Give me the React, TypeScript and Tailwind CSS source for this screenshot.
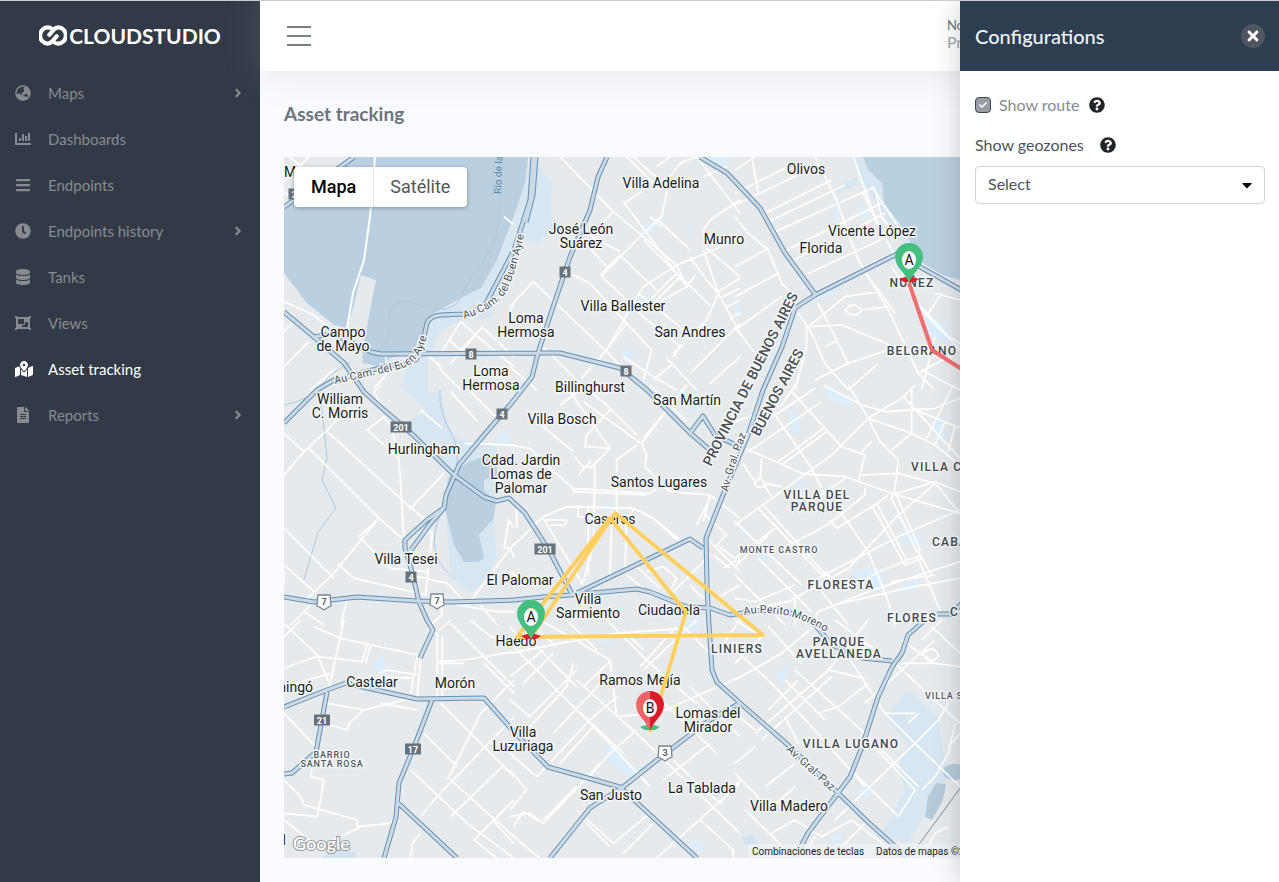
import { useState } from "react";
import type { ReactNode } from "react";
import type { IconType } from "react-icons";
import {
  FaAngleRight,
  FaBars,
  FaCaretDown,
  FaChartBar,
  FaCheck,
  FaClock,
  FaDatabase,
  FaFileAlt,
  FaGlobeAsia,
  FaMapMarkedAlt,
  FaObjectGroup,
  FaQuestionCircle,
  FaTimes,
} from "react-icons/fa";

type NavItem = { label: string; icon: IconType; expandable?: boolean; active?: boolean };

const navItems: NavItem[] = [
  { label: "Maps", icon: FaGlobeAsia, expandable: true },
  { label: "Dashboards", icon: FaChartBar },
  { label: "Endpoints", icon: FaBars },
  { label: "Endpoints history", icon: FaClock, expandable: true },
  { label: "Tanks", icon: FaDatabase },
  { label: "Views", icon: FaObjectGroup },
  { label: "Asset tracking", icon: FaMapMarkedAlt, active: true },
  { label: "Reports", icon: FaFileAlt, expandable: true },
];

function Logo() {
  return (
    <a href="#" className="flex h-[69px] items-center justify-center gap-0.5 text-white">
      <svg viewBox="116 77 82 62" className="h-[21px] w-7" fill="none" stroke="currentColor" strokeWidth="12">
        <path d="M146 106 L158 92 Q165 84 173 84 A22 24 0 0 1 173 132 Q165 132 160 128" strokeLinecap="round" />
        <path d="M168 110 L156 124 Q149 132 141 132 A22 24 0 0 1 141 84 Q149 84 154 88" strokeLinecap="round" />
      </svg>
      <span className="text-[21px] leading-6 font-bold">CLOUDSTUDIO</span>
    </a>
  );
}

function Sidebar() {
  return (
    <aside className="w-[260px] shrink-0 bg-[#333a47]">
      <Logo />
      <nav>
        <ul>
          {navItems.map(({ label, icon: Icon, expandable, active }) => (
            <li key={label}>
              <a
                href="#"
                className={`flex h-[46px] items-center px-[15px] text-[15px] ${active ? "text-white" : "text-[#868b90]"}`}
              >
                <span className="flex w-[33px] shrink-0">
                  <Icon className={active ? "h-4 w-[18px]" : "size-4"} />
                </span>
                <span className="grow">{label}</span>
                {expandable && <FaAngleRight className="size-3.5" />}
              </a>
            </li>
          ))}
        </ul>
      </nav>
    </aside>
  );
}

function TopBar() {
  return (
    <header className="flex h-[70px] items-center justify-between bg-white pr-[315px] pl-[27px] shadow-[0_0_35px_rgba(154,161,171,0.25)]">
      <button type="button" aria-label="Toggle menu" className="flex w-6 flex-col gap-[7px]">
        <span className="h-0.5 w-full bg-[#7b8084]" />
        <span className="h-0.5 w-full bg-[#7b8084]" />
        <span className="h-0.5 w-full bg-[#7b8084]" />
      </button>
      <div className="flex flex-col pb-1">
        <span className="text-[13px] leading-4 text-[#6c757d]">No</span>
        <span className="text-base leading-[18px] text-[#a0a5aa]">Pr</span>
      </div>
    </header>
  );
}

/* Minor streets, one sheet per grid cell, drawn at three times map scale. */
const streetSheets: { x: number; y: number; d: string }[] = [
  {
    x: 284,
    y: 150,
    d: "M15 20L70 65M75 20L0 95M0 125L40 165M0 455L90 495L180 570M0 650L75 575M0 545L25 520M660 200L690 225M465 620L530 515L575 555L500 640M575 555L690 650M465 640L470 660L530 720M495 570L560 625M595 532L530 600M595 532L690 620M680 480L690 460M430 615L470 650M305 620L310 670L270 715M80 720L150 660",
  },
  {
    x: 510,
    y: 150,
    d: "M150 20L310 185L500 345L530 410M310 185L240 260M350 20L445 115M370 20L470 110M440 50L480 20M510 40L480 80L455 200L385 265L275 378L400 500L510 590M410 115L340 160L365 145M210 240L330 305M200 250L290 350M340 155L530 410L555 375M420 200L455 230M500 345L400 410L290 600L215 685M530 410L450 455M600 465L480 350M440 205L540 300M0 470L70 395L285 600L400 720M190 375L240 400L350 520L425 600L400 690M350 520L285 605L215 685M385 430L510 530L535 560L490 620M540 320L590 390L620 425M580 300L625 430L690 550M500 345L600 305L690 260M580 240L600 210L690 150M510 40L560 20L690 190M580 80L650 50M625 425L690 385M630 445L690 415M645 475L690 450M660 505L690 490M625 430L590 510L490 610M690 520L540 670M340 620L430 680L500 720M470 625L560 720M490 640L430 690M690 620L600 700M270 375L330 315L440 420M500 370L420 450M510 380L430 460M580 240L585 290L690 380M100 590L230 720M0 650L80 720M400 270L500 370",
  },
  {
    x: 735,
    y: 150,
    d: "M355 20L415 190L490 340L550 470L675 600M240 20L300 140L370 330L460 480L550 670L600 720M410 110L490 230M420 120L440 200L480 260M385 130L440 250M0 60L60 20M0 130L180 40M0 165L200 70M90 190L290 90M100 215L330 105M120 245L420 110M155 300L440 160M175 330L450 190M210 375L480 250M50 20L70 130M0 200L40 250L100 300L140 400L180 440M0 350L100 295M0 440L130 370M0 540L140 440M190 490L230 550L270 640L340 720M250 460L340 640M220 530L320 525L430 570L500 600M330 440L430 425M220 530L330 440M215 530L215 590L180 720M0 530L60 610M270 590L310 570M240 690L340 640L460 600M600 430L675 450M620 430L580 490M550 670L640 620M560 660L675 720M470 350L540 450L640 560L675 580M330 480Q355 450 380 480Q360 510 330 480M380 480L460 470M390 370L430 420L480 490M600 560L560 720M640 620L675 660M430 640L340 720",
  },
  {
    x: 284,
    y: 385,
    d: "M0 145L60 200L0 270M60 200L130 135L230 30M75 190L285 400L360 465M130 140L360 350L430 410M285 400L225 455L320 550L430 560M285 400L140 575L60 650M0 430L150 580M160 535L210 580L430 630M0 540L90 620M345 220L360 465M345 220L250 135L300 95L320 120L345 215M270 20L300 75M480 265L375 375M430 440H445L425 630M410 75L475 130M500 20L580 110M560 20L640 100M540 175L690 180M270 20L290 0M380 570L490 595L550 660M60 680L120 720M190 640L170 720M20 720L80 660M520 660L640 680L690 680M550 660L680 490L660 490L675 405L690 430M680 490L690 520M470 660L475 690L440 720M580 650L640 720M0 560L0 600",
  },
  {
    x: 510,
    y: 385,
    d: "M100 125L190 200M305 70L230 150L225 185L300 190L240 250M150 60L230 0M180 20L300 190M240 20L290 60L380 150M220 50L400 180M320 220L320 380M530 0L395 175L410 210L405 245L480 320L600 330L580 410M380 180L320 225M500 40L400 160M190 310L420 325L440 310M190 320L410 330M190 310V320M0 180L60 190L120 250L190 310M255 245L250 480L220 590M195 215L220 245L255 245M205 270L245 225M100 395L170 365L370 370L430 400L510 465M205 360L205 395L300 400M100 405L170 405L165 420L120 420M235 360L235 570M305 410L300 570M350 400L345 550M100 400L220 600M100 395L0 490M430 400L500 465M20 370L20 430M600 330L690 400M585 390L650 450L620 480L690 530M600 340L560 420M600 470L690 560M660 550L610 510M350 570L400 610M380 545L450 610M410 560L460 545L500 580L480 620M490 620L600 510M540 600L580 640M620 640L690 600M0 560L60 600M60 680L120 640M160 560L140 600M640 550L690 520M370 370L360 400L300 380M420 0L530 110",
  },
  {
    x: 735,
    y: 385,
    d: "M170 20L320 185L390 210L370 290M30 190L100 220L200 265L330 275L470 325L675 385M80 220L75 285M88 300L110 335M60 295A14 12 0 1 0 88 295A14 12 0 1 0 60 295M90 295L140 305M20 230L60 290M120 90L230 250L270 330L330 400L400 500L460 650L480 720M0 110L140 60L180 0M0 170L210 30L240 10M40 200L260 50M130 230L265 130M140 240L275 140M0 420L290 210L400 100L505 35L540 0M400 100L530 145L600 180L675 240M265 0L380 60L450 80L600 70L675 40M340 0L400 100L435 170L490 225L480 310L470 340L545 500L555 495L480 320M410 170L380 200M530 10L530 145L470 195M505 35L675 220M655 0L575 160M530 70L675 130M630 110L600 180M660 120L640 200M0 520L120 430M70 370L270 580M85 360L290 590M0 410L200 600M0 545L100 450M70 520L230 680M160 480L240 440L290 410L390 330V310M285 405L305 430L420 360L460 330M470 330L600 290L675 320M380 270L490 265L600 295L480 400L340 550L160 650L0 680M550 500L590 570M410 360L510 540L560 520M425 355L520 535M600 295L675 385M675 375L500 450L250 580M270 560L330 620M675 530L400 620L250 680L230 720M675 580L510 610L300 660M550 520L620 690M380 590L430 560L560 510M260 620L340 720M470 590L600 570M0 570L150 720M0 640L60 650L180 600M180 640V720M330 280L230 350",
  },
  {
    x: 284,
    y: 620,
    d: "M0 10L100 105L140 200M180 0L135 205M0 145L95 110L200 120M50 0L0 50M90 20L170 55L400 105M260 75L245 130M250 70L235 125L200 120M400 105L380 220M410 115L400 230M285 160L310 150L400 165M290 170L390 175M460 40V230M475 50V230M465 125L540 120L690 95M540 130H465M500 10L690 200M455 40L500 0M430 20L455 40M560 0L620 50L690 70M690 180L590 280L490 480M470 250L690 470M690 290L450 540L410 590M420 340L520 440M380 450L550 610L690 715M500 480L690 650M655 440L500 590M690 540L570 660M410 640L385 670L380 715M625 600L690 670M130 250L240 270L400 230M240 270L195 310L190 330L120 310M290 250L400 270M0 280L95 380M85 440L80 470L120 480L100 590L0 580M0 480L50 530L60 555L220 600L220 620L320 610L340 580M230 620L90 690M0 600L100 680M140 160L0 200M570 660L640 715M600 130L690 220",
  },
  {
    x: 510,
    y: 620,
    d: "M0 100L150 70L320 40L520 25M0 70L170 240L340 400M30 30L200 200M60 10L140 80M190 130L170 200L60 320M0 170L100 90M40 190L130 100M0 240L60 290L200 150M130 340L290 170M90 0L300 120L315 245L320 290M220 200L300 125M290 0L420 130L570 260M340 30L400 90M400 150L560 0M390 140L500 20M110 180L260 330L420 500M200 180L390 350L690 640M320 230L240 300L80 470M250 320L150 430M380 330L300 400L220 490M420 290L690 170M320 290L440 280M440 230L620 400M490 420L560 490L630 550L690 480M460 480L600 370M520 20L600 100M620 100L690 0M0 450L50 510L0 570M0 590L60 580L100 610L270 430M0 640L90 715M100 600L200 500M200 570L310 670L420 580M220 600L300 680M340 700L440 600M390 560L540 700M570 600L670 690V715M440 715L690 490M80 470L0 400M0 20L60 90M170 0L260 90M540 200L690 350M10 620L40 575L100 610",
  },
  {
    x: 735,
    y: 620,
    d: "M0 180L140 100L200 50L260 0M110 190L230 320L390 500M150 180L270 300M180 150L390 340L550 500M0 90L110 190M60 340L280 150L400 0M80 360L290 170M280 150L390 175M300 50L450 280M300 0L420 90M100 270L190 180M150 290L190 370M250 280L310 260L400 190M470 130L600 130L675 140M480 130L675 310M500 60L600 130M590 20L675 100M450 280L540 370L675 500M540 370L610 300L640 250M540 370L300 600M380 340L540 510L490 590M360 460L490 590M390 250L600 60M0 430L60 380M90 500L180 430M0 460L60 520L100 570L180 500M30 570L180 715M110 640L180 600L260 650L350 600L480 700M240 650L200 715M0 280L60 330M565 100Q600 70 610 110Q580 140 565 100M620 0L560 60M450 280H540M520 310L550 280M660 310L640 400L600 470L560 510M640 620L600 640L560 715M100 20L200 130M0 0L80 50L0 130M675 340L640 380M320 680L400 600",
  },
];

const parks = [
  "M528 157L537 165L546 176L552 182L551 205L553 230L537 243L522 240L505 275L490 318L464 320L440 330L428 360L428 392L441 392L448 425L457 438L497 447L494 520L497 558L484 582L471 593L451 578L446 518L450 470L412 432L412 420L426 410L400 385L416 350L431 315L457 300L481 288L497 260L514 223Z",
  "M863 157L868 170L882 183L884 203L900 215L912 240L925 262L900 240L880 210L862 180L850 157Z",
  "M908 690L938 717L947 777L908 843L878 837L892 817L905 790L898 767L908 745L885 717Z",
  "M834 188L857 176V184L838 194Z",
];

const smallGreens =
  "M640 230L660 218L664 222L643 238ZM686 226L691 230V238L687 234ZM628 305L648 295L650 302L632 315ZM624 350L634 352L632 362L623 358ZM710 157L730 157L728 164L715 165ZM835 205L841 212L838 220L833 215ZM860 205L871 210L868 220L860 214ZM925 315L947 325L950 345L928 335ZM913 342L930 350L925 362L916 358ZM825 388L852 398L850 405L830 402ZM788 408L800 420L798 435L790 425ZM855 570L880 568L884 590L862 590L852 582ZM900 535L922 535L920 545L902 542ZM900 588L918 580L915 590L905 592ZM605 745L618 750L636 770L632 779L616 768L605 755ZM700 157L712 157L709 163ZM372 665L382 655L386 670L378 672ZM495 438L508 430L512 440L500 446ZM686 400L700 404L698 412L686 408ZM604 502L612 502L610 512L604 510ZM672 622L700 620L698 632L676 632ZM776 675L788 666L785 680L778 682ZM855 792L872 783L872 795L860 800ZM690 840L702 842L703 852L692 850ZM830 838L842 832L840 845ZM595 634L612 636L612 642L600 644ZM758 555L770 550L774 560L762 562ZM738 525L746 530L742 536ZM933 415L943 420L945 440L934 440ZM793 480L803 485L808 500L800 502ZM735 300L741 310L736 320ZM808 300L822 292L838 288L830 296Z";

const highways = [
  "M533 157L530 200L523 222L514 250L484 307L464 314L441 315Q430 316 427 323L421 350L416 360L380 368L334 380L317 390L284 423",
  "M536 157L533 195L526 222",
  "M284 207L354 157",
  "M284 312L314 337L344 363L364 392L384 410L411 433L454 475L484 497L497 501L509 498L525 513L550 552L573 596",
  "M314 337L331 334L347 340L371 352L381 354L538 353L560 353L620 368L647 390L690 433L710 450",
  "M690 433L703 416L715 435L740 447",
  "M607 157L598 177L590 210L570 257L553 307L538 353L532 377L510 405L484 435L459 465L454 477L446 495L444 508L427 520L405 540V548L412 572L419 602L427 620L433 630L420 658",
  "M444 508L430 524L411 550",
  "M284 597L314 602L357 597L417 601L451 602L514 600L543 597L570 595L637 589L650 592L687 607L710 608L730 615L748 612Q790 605 815 625L832 645L862 658L892 661",
  "M577 593L690 539L703 548",
  "M965 292L922 268L897 254L865 270L815 295L795 308L782 347L763 390L748 435L723 495L706 538L707 585L709 625L712 670L717 682L740 703L788 745L832 787L868 822L908 858",
  "M700 157L727 173L760 208L785 253L815 294",
  "M965 600L952 614L937 614M925 620L908 635L902 653L892 667L878 697L862 747L850 777L838 793L808 833L795 858",
  "M740 703L710 720L683 740L657 760L623 787L590 808L570 833L550 858",
  "M284 707L327 690L346 683L367 688L417 699L484 698L517 735L548 767L620 787L697 858",
  "M327 692L316 752L292 773L284 774",
  "M432 700L414 747L399 783L396 817L384 858M397 802L457 858",
].join("");

const streams =
  "M500 200Q500 240 484 260T460 298T420 305T390 320T374 352M321 400L327 458L322 480L336 508L318 532L304 580M440 390Q438 410 452 435T444 505T450 575M284 405Q310 402 330 375L350 362";

type Label = { x: number; y: number; lines: string[]; kind?: "district" | "barrio"; anchor?: "end" | "start" };

const labels: Label[] = [
  { x: 284, y: 177, lines: ["Ma"], anchor: "start" },
  { x: 661, y: 188, lines: ["Villa Adelina"] },
  { x: 806, y: 174, lines: ["Olivos"] },
  { x: 581, y: 234, lines: ["José León", "Suárez"] },
  { x: 724, y: 244, lines: ["Munro"] },
  { x: 872, y: 236, lines: ["Vicente López"] },
  { x: 821, y: 253, lines: ["Florida"] },
  { x: 623, y: 311, lines: ["Villa Ballester"] },
  { x: 526, y: 323, lines: ["Loma", "Hermosa"] },
  { x: 690, y: 337, lines: ["San Andres"] },
  { x: 343, y: 337, lines: ["Campo", "de Mayo"] },
  { x: 491, y: 376, lines: ["Loma", "Hermosa"] },
  { x: 590, y: 392, lines: ["Billinghurst"] },
  { x: 340, y: 404, lines: ["William", "C. Morris"] },
  { x: 687, y: 405, lines: ["San Martín"] },
  { x: 562, y: 424, lines: ["Villa Bosch"] },
  { x: 424, y: 454, lines: ["Hurlingham"] },
  { x: 521, y: 465, lines: ["Cdad. Jardin", "Lomas de", "Palomar"] },
  { x: 659, y: 487, lines: ["Santos Lugares"] },
  { x: 610, y: 524, lines: ["Caseros"] },
  { x: 406, y: 564, lines: ["Villa Tesei"] },
  { x: 520, y: 585, lines: ["El Palomar"] },
  { x: 588, y: 604, lines: ["Villa", "Sarmiento"] },
  { x: 669, y: 615, lines: ["Ciudadela"] },
  { x: 516, y: 646, lines: ["Haedo"] },
  { x: 640, y: 685, lines: ["Ramos Mejía"] },
  { x: 372, y: 687, lines: ["Castelar"] },
  { x: 455, y: 688, lines: ["Morón"] },
  { x: 313, y: 692, lines: ["Ituzaingó"], anchor: "end" },
  { x: 708, y: 718, lines: ["Lomas del", "Mirador"] },
  { x: 523, y: 737, lines: ["Villa", "Luzuriaga"] },
  { x: 611, y: 800, lines: ["San Justo"] },
  { x: 702, y: 793, lines: ["La Tablada"] },
  { x: 789, y: 811, lines: ["Villa Madero"] },
  { x: 286, y: 845, lines: ["l"], anchor: "end" },
  { x: 912, y: 287, lines: ["NUÑEZ"], kind: "district" },
  { x: 922, y: 355, lines: ["BELGRANO"], kind: "district" },
  { x: 911, y: 471, lines: ["VILLA CRESPO"], kind: "district", anchor: "start" },
  { x: 817, y: 499, lines: ["VILLA DEL", "PARQUE"], kind: "district" },
  { x: 932, y: 546, lines: ["CABALLITO"], kind: "district", anchor: "start" },
  { x: 841, y: 589, lines: ["FLORESTA"], kind: "district" },
  { x: 912, y: 622, lines: ["FLORES"], kind: "district" },
  { x: 950, y: 616, lines: ["C"], kind: "district", anchor: "start" },
  { x: 839, y: 646, lines: ["PARQUE", "AVELLANEDA"], kind: "district" },
  { x: 737, y: 653, lines: ["LINIERS"], kind: "district" },
  { x: 851, y: 748, lines: ["VILLA LUGANO"], kind: "district" },
  { x: 779, y: 553, lines: ["MONTE CASTRO"], kind: "barrio" },
  { x: 925, y: 699, lines: ["VILLA SOLDATI"], kind: "barrio", anchor: "start" },
  { x: 332, y: 758, lines: ["BARRIO", "SANTA ROSA"], kind: "barrio" },
];

const labelStyles = {
  town: "fill-[#1c1d20] text-[14px]",
  district: "fill-[#45494d] text-[12px] font-medium tracking-widest",
  barrio: "fill-[#55595d] text-[9px] font-medium tracking-widest",
};
const lineSteps = { town: 14, district: 12, barrio: 9 };

function MapLabel({ x, y, lines, kind, anchor = "middle" }: Label) {
  const style = kind ?? "town";
  return (
    <text textAnchor={anchor} className={labelStyles[style]}>
      {lines.map((line, i) => (
        <tspan key={line} x={x} y={y + i * lineSteps[style]}>
          {line}
        </tspan>
      ))}
    </text>
  );
}

const roadLabels = [
  { id: "ayre-north", d: "M464 319Q500 308 509 286T525 230", text: "Au Cam. del Buen Ayre" },
  { id: "ayre-west", d: "M335 384L400 369Q422 362 427 335", text: "Au Cam. del Buen Ayre" },
  { id: "paz-north", d: "M728 492Q734 465 748 430", text: "Av. Gral. Paz" },
  { id: "paz-south", d: "M786 750L835 795", text: "Av. Gral. Paz" },
  { id: "moreno", d: "M744 615Q785 607 824 631", text: "Au Perito Moreno" },
];

const plates = [
  { x: 565, y: 272, n: "4" },
  { x: 471, y: 354, n: "8" },
  { x: 626, y: 371, n: "8" },
  { x: 502, y: 414, n: "4" },
  { x: 401, y: 427, n: "201" },
  { x: 545, y: 549, n: "201" },
  { x: 411, y: 577, n: "4" },
  { x: 322, y: 720, n: "21" },
  { x: 413, y: 749, n: "17" },
  { x: 294, y: 194, n: "2" },
];

const shields = [
  { x: 324, y: 602, n: "7" },
  { x: 437, y: 601, n: "7" },
  { x: 665, y: 753, n: "3" },
];

function Pin({ x, y, letter, light, dark, base }: { x: number; y: number; letter: string; light: string; dark: string; base: string }) {
  return (
    <g transform={`translate(${x} ${y})`}>
      <path d="M-10 -4L-4 -6H4L10 -4L5 -1H-5Z" fill={base} />
      <path d="M0 0C-3 -10 -14 -15 -14 -27A14 14 0 0 1 0 -40Z" fill={light} />
      <path d="M0 0C3 -10 14 -15 14 -27A14 14 0 0 0 0 -40Z" fill={dark} />
      <ellipse cx="0" cy="-23" rx="7" ry="9" fill="#fff" />
      <text y="-18" textAnchor="middle" className="fill-[#111] text-[14px]">
        {letter}
      </text>
    </g>
  );
}

function CityMap() {
  return (
    <svg
      viewBox="284 157 971 701"
      preserveAspectRatio="xMinYMin slice"
      className="block size-full font-['Roboto',sans-serif]"
      role="img"
      aria-label="Mapa"
    >
      <rect x="284" y="157" width="971" height="701" fill="#e6eaed" />
      <path d={parks.join("")} fill="#d7e6f1" />
      <path
        d="M354 157H528L525 183L512 222L497 260L481 288L457 300L431 315L421 337L416 352L390 358L384 367L362 363L364 343L372 300L376 280L361 275L354 305L347 328L334 325L307 303L284 273V207Z"
        fill="#bad0e1"
      />
      <path d="M863 157L868 170L882 183L884 203L905 230L918 260L942 275L960 280L1255 420V157Z" fill="#b9d0e1" />
      <path d="M464 465Q484 452 497 460L497 475L484 480V490L496 502L494 518L479 535L484 558L478 562L464 562L454 545L444 505L448 478Z" fill="#bad0e1" />
      <path d="M936 783L946 784L943 800L932 820L925 817L928 797Z" fill="#b5cbdc" />
      <ellipse cx="955" cy="772" rx="12" ry="8" fill="#b5cbdc" />
      <path d="M320 858L335 850L355 852V858ZM742 837L752 835L762 848L745 845Z" fill="#d2e2ee" />
      <path d={smallGreens} fill="#dceefb" />
      <path d={streams} fill="none" stroke="#adc8dc" strokeWidth="1" />
      <path d="M375 157L370 217L364 260L353 293L347 328" fill="none" stroke="#fff" strokeWidth="2" />
      {streetSheets.map((sheet) => (
        <path
          key={`${sheet.x}-${sheet.y}`}
          d={sheet.d}
          transform={`translate(${sheet.x} ${sheet.y}) scale(0.33333)`}
          fill="none"
          stroke="#fff"
          strokeWidth="5"
          strokeLinejoin="round"
        />
      ))}
      <path d="M975 768L917 847" fill="none" stroke="#7f8c96" strokeWidth="1" />
      <path d={highways} fill="none" stroke="#6590b4" strokeWidth="5" strokeLinejoin="round" />
      <path d={highways} fill="none" stroke="#ccdae6" strokeWidth="3" strokeLinejoin="round" />

      {plates.map(({ x, y, n }) => (
        <g key={`${x}-${y}`}>
          <rect x={x - (n.length * 5 + 6) / 2} y={y - 5.5} width={n.length * 5 + 6} height="11" fill="#68727b" />
          <text x={x} y={y + 4} textAnchor="middle" className="fill-white text-[9px] font-bold">
            {n}
          </text>
        </g>
      ))}
      {shields.map(({ x, y, n }) => (
        <g key={`${x}-${y}`}>
          <path
            d={`M${x - 6} ${y - 7}H${x + 6}L${x + 7} ${y + 4}Q${x + 4} ${y + 5} ${x} ${y + 8}Q${x - 4} ${y + 5} ${x - 7} ${y + 4}Z`}
            fill="#fff"
            stroke="#7e868d"
            strokeWidth="1.3"
          />
          <text x={x} y={y + 3} textAnchor="middle" className="fill-[#5b636b] text-[9px] font-bold">
            {n}
          </text>
        </g>
      ))}

      <g stroke="#f4f6f8" strokeWidth="3" strokeLinejoin="round" paintOrder="stroke">
        <g className="fill-[#4b5258] text-[11px]">
          {roadLabels.map(({ id, d, text }) => (
            <g key={id}>
              <path id={id} d={d} fill="none" stroke="none" />
              <text>
                <textPath href={`#${id}`}>{text}</textPath>
              </text>
            </g>
          ))}
        </g>
        {labels.map((label) => (
          <MapLabel key={`${label.x}-${label.y}`} {...label} />
        ))}
        <g className="fill-[#4a4e52] text-[14px] font-medium">
          <text transform="translate(711 467) rotate(-63)">PROVINCIA DE BUENOS AIRES</text>
          <text transform="translate(759 437) rotate(-62)">BUENOS AIRES</text>
        </g>
      </g>
      <text transform="translate(501 194) rotate(-88)" className="fill-[#5f87a8] text-[10px]">
        Río de la Plata
      </text>

      <path d="M531 637L615 513L763 635L517 637L610 518L686 612L650 732" fill="none" stroke="#ffd05f" strokeWidth="4" strokeLinejoin="round" />
      <path d="M909 283L932 350L960 368L985 384" fill="none" stroke="#f26d6d" strokeWidth="4" strokeLinejoin="round" />
      <Pin x={909} y={283} letter="A" light="#45bf7f" dark="#45bf7f" base="#dc1f2b" />
      <Pin x={531} y={640} letter="A" light="#45bf7f" dark="#45bf7f" base="#dc1f2b" />
      <Pin x={650} y={731} letter="B" light="#f06469" dark="#dc1b28" base="#45bf7f" />

      <text
        x="293"
        y="850"
        className="fill-white font-['Lato',sans-serif] text-[18px] font-semibold"
        stroke="#92979b"
        strokeWidth="2"
        paintOrder="stroke"
      >
        Google
      </text>
    </svg>
  );
}

function MapTypeToggle() {
  const [type, setType] = useState("Mapa");
  return (
    <div className="absolute top-2.5 left-2.5 flex h-10 rounded-sm bg-white font-['Roboto',sans-serif] text-lg shadow-[0_1px_4px_rgba(0,0,0,0.3)]">
      {["Mapa", "Satélite"].map((name) => (
        <button
          key={name}
          type="button"
          onClick={() => setType(name)}
          className={`border-r border-[#e6e6e6] px-[17px] last:border-r-0 last:pl-4 ${type === name ? "font-medium text-black" : "text-[#565656]"}`}
        >
          {name}
        </button>
      ))}
    </div>
  );
}

function MapCredits() {
  return (
    <div className="absolute right-0 bottom-0 left-[464px] flex h-3.5 items-center gap-3 bg-[#f0f2f4]/80 px-1 font-['Roboto',sans-serif] text-[10px] text-[#222]">
      <button type="button">Combinaciones de teclas</button>
      <span>Datos de mapas ©2022</span>
    </div>
  );
}

function Hint({ label }: { label: string }) {
  return (
    <button type="button" aria-label={label} className="text-[#212529]">
      <FaQuestionCircle className="size-4" />
    </button>
  );
}

function Row({ children }: { children: ReactNode }) {
  return <div className="flex h-6 items-center">{children}</div>;
}

function ConfigPanel() {
  return (
    <section className="absolute inset-y-0 right-0 w-[319px] bg-white shadow-[0_0_24px_rgba(50,58,70,0.25)]">
      <header className="flex h-[70px] items-center justify-between bg-[#2c3e50] pr-3.5 pl-[15px]">
        <h2 className="text-xl font-medium text-[#f1f3f5]">Configurations</h2>
        <button
          type="button"
          aria-label="Close"
          className="flex size-6 items-center justify-center rounded-full bg-[#505561] text-white"
        >
          <FaTimes className="size-4" />
        </button>
      </header>
      <div className="flex flex-col gap-4 pt-[22px] pr-3.5 pl-[15px]">
        <Row>
          <span className="relative mr-2 flex size-4">
            <input
              id="show-route"
              type="checkbox"
              defaultChecked
              className="peer size-4 appearance-none rounded border border-[#3b4652] bg-[#979ea5]"
            />
            <FaCheck className="pointer-events-none absolute top-1 left-1 hidden size-2 text-white peer-checked:block" />
          </span>
          <label htmlFor="show-route" className="mr-2.5 text-base text-[#868c91]">
            Show route
          </label>
          <Hint label="About show route" />
        </Row>
        <div>
          <Row>
            <label htmlFor="geozones" className="mr-4 text-base text-[#4d545a]">
              Show geozones
            </label>
            <Hint label="About geozones" />
          </Row>
          <div className="relative mt-[9px]">
            <select
              id="geozones"
              className="block h-[38px] w-full appearance-none rounded border border-[#ced4da] bg-white pr-8 pb-0.5 pl-3 text-base text-[#4d545a]"
            >
              <option>Select</option>
            </select>
            <FaCaretDown className="pointer-events-none absolute top-[11px] right-2.5 size-4 text-black" />
          </div>
        </div>
      </div>
    </section>
  );
}

export default function App() {
  return (
    <div className="relative flex min-h-screen overflow-hidden border-t border-[#c9cbcc] bg-[#fafbfe] font-['Lato',sans-serif]">
      <Sidebar />
      <div className="flex min-w-0 grow flex-col">
        <TopBar />
        <main className="flex grow flex-col px-6 pb-6">
          <h1 className="flex h-[86px] items-center text-[19px] font-bold text-[#6c757d]">Asset tracking</h1>
          <div className="relative min-h-[701px] overflow-hidden">
            <div className="absolute inset-0">
              <CityMap />
            </div>
            <MapTypeToggle />
            <MapCredits />
          </div>
        </main>
      </div>
      <ConfigPanel />
    </div>
  );
}
